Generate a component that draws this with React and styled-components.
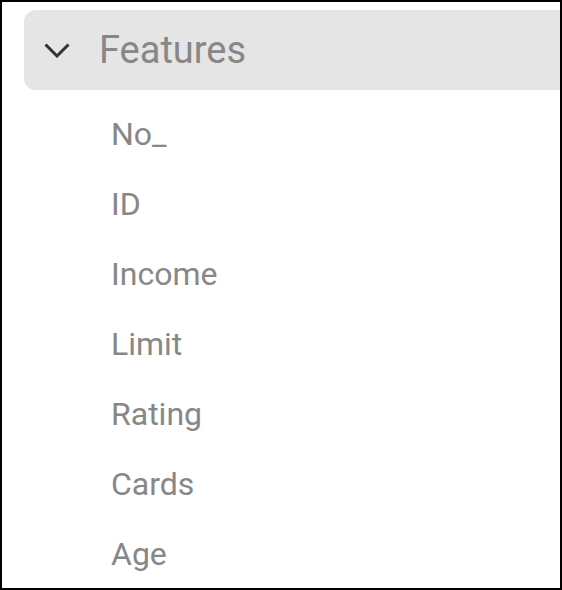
import React from "react";
import styled, { createGlobalStyle } from "styled-components";

const Global = createGlobalStyle`
  html, body { margin: 0; padding: 0; background: #fff; }
  body { font-family: Roboto, "Noto Sans", Arial, sans-serif; }
`;

const Frame = styled.div`
  box-sizing: border-box;
  width: 562px;
  height: 590px;
  border: 2px solid #000;
  overflow: hidden;
  background: #fff;
`;

const Header = styled.div`
  display: flex;
  align-items: center;
  gap: 28px;
  box-sizing: border-box;
  height: 80px;
  margin: 8px 0 0 22px;
  width: calc(100% + 20px);
  padding-left: 19px;
  background: #e5e5e5;
  border-radius: 12px;
`;

const Chevron = styled.svg`
  display: block;
  width: 28px;
  height: 16px;
  flex: none;
`;

const Title = styled.span`
  font-size: 38px;
  color: #878787;
  line-height: 1;
`;

const List = styled.ul`
  list-style: none;
  margin: 0;
  padding: 9px 0 0 109px;
`;

const Item = styled.li`
  height: 70px;
  line-height: 70px;
  font-size: 32px;
  color: #878787;
`;

const items = ["No_", "ID", "Income", "Limit", "Rating", "Cards", "Age"];

export default function App() {
  return (
    <>
      <Global />
      <Frame>
        <Header>
          <Chevron viewBox="0 0 28 16">
            <polyline
              points="2.5,2.5 14,14 25.5,2.5"
              fill="none"
              stroke="#333"
              strokeWidth="3"
            />
          </Chevron>
          <Title>Features</Title>
        </Header>
        <List>
          {items.map((t) => (
            <Item key={t}>{t}</Item>
          ))}
        </List>
      </Frame>
    </>
  );
}
